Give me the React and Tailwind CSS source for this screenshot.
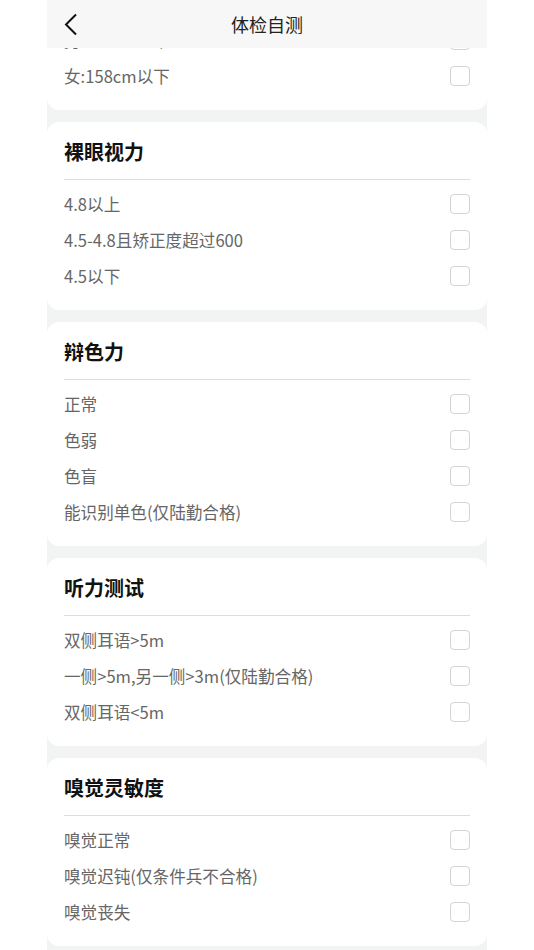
import React from "react";

const sections = [
  { title: null, items: ["男:160cm以下", "女:158cm以下"] },
  { title: "裸眼视力", items: ["4.8以上", "4.5-4.8且矫正度超过600", "4.5以下"] },
  { title: "辩色力", items: ["正常", "色弱", "色盲", "能识别单色(仅陆勤合格)"] },
  { title: "听力测试", items: ["双侧耳语>5m", "一侧>5m,另一侧>3m(仅陆勤合格)", "双侧耳语<5m"] },
  { title: "嗅觉灵敏度", items: ["嗅觉正常", "嗅觉迟钝(仅条件兵不合格)", "嗅觉丧失"] },
];

function Row({ label }) {
  return (
    <div className="flex h-9 items-center justify-between">
      <span className="text-[16.6px] leading-6 text-[#666666]">{label}</span>
      <span className="h-5 w-5 rounded-[4px] border border-[#d4d4d4] bg-white" />
    </div>
  );
}

export default function App() {
  return (
    <div
      className="min-h-[950px] w-full bg-white"
      style={{ fontFamily: '"Noto Sans CJK SC", "Noto Sans", sans-serif' }}
    >
      <div className="relative mx-auto h-[950px] w-[440px] overflow-hidden bg-[#f1f4f3]">
        <div className="absolute left-0 right-0 top-0 z-10 flex h-12 items-center justify-center bg-[#f7f7f7]">
          <svg
            className="absolute left-[17px] top-[13px]"
            width="14"
            height="23"
            viewBox="0 0 14 23"
            fill="none"
          >
            <path d="M12 1.5 L2 11.5 L12 21.5" stroke="#111" strokeWidth="2" />
          </svg>
          <span className="text-[18px] text-[#222]">体检自测</span>
        </div>
        <div className="flex flex-col gap-3">
          {sections.map((s, i) => (
            <div
              key={i}
              className={
                s.title
                  ? "rounded-[12px] bg-white px-[17px] pb-4"
                  : "rounded-b-[12px] bg-white px-[17px] pb-4 pt-[22px]"
              }
            >
              {s.title && (
                <>
                  <div className="pt-[18px] text-[20px] font-bold leading-6 text-[#111]">{s.title}</div>
                  <div className="mb-[6px] mt-[15px] h-px bg-[#dddddd]" />
                </>
              )}
              {s.items.map((it) => (
                <Row key={it} label={it} />
              ))}
            </div>
          ))}
        </div>
      </div>
    </div>
  );
}
